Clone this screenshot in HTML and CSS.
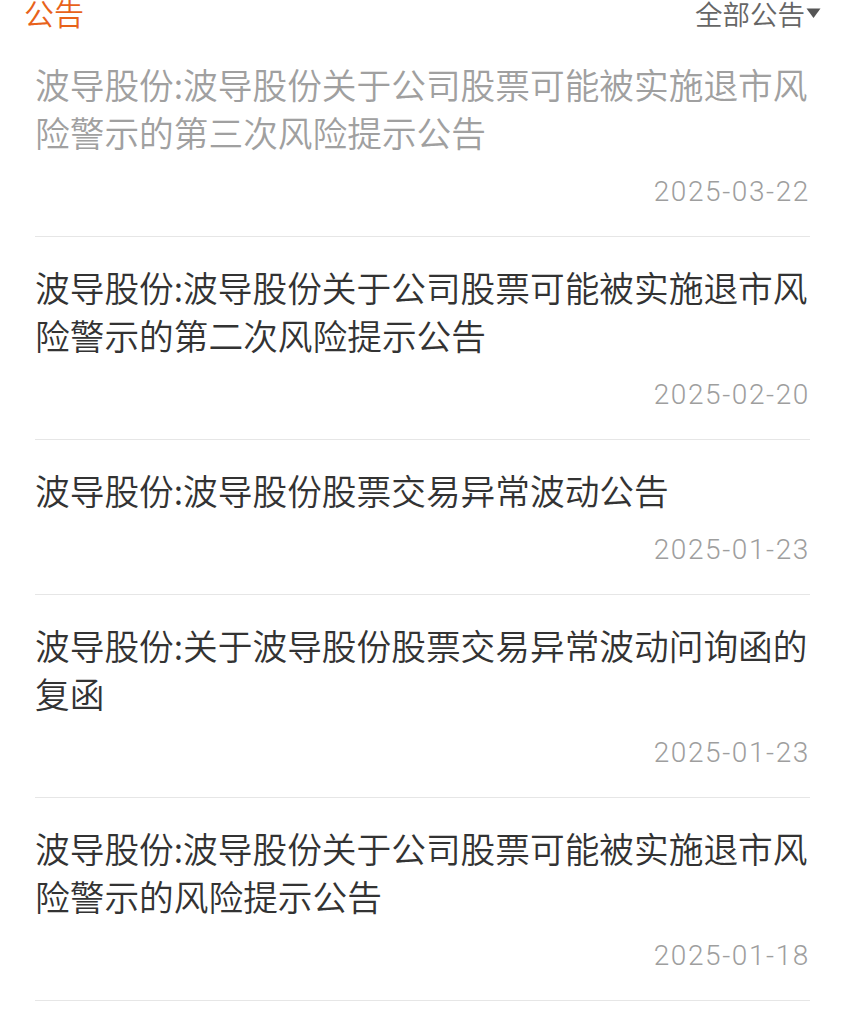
FILE: index.html
```html
<!DOCTYPE html>
<html lang="zh-CN">
<head>
    <meta charset="UTF-8">
    <meta name="viewport" content="width=device-width, initial-scale=1.0">
    <title>公告</title>
    <link rel="stylesheet" href="styles.css">
</head>
<body>
    <div class="container">
        <div class="notice-head">
            <span class="notice-title">公告</span>
            <span class="notice-filter">全部公告<svg class="caret" width="17" height="12" viewBox="0 0 17 12"><path d="M1.5 1.5h14L8.5 11z" fill="#555"/></svg></span>
        </div>
        <ul class="notice-list">
            <li class="read">
                <p class="item-title">波导股份:波导股份关于公司股票可能被实施退市风险警示的第三次风险提示公告</p>
                <p class="item-date">2025-03-22</p>
            </li>
            <li>
                <p class="item-title">波导股份:波导股份关于公司股票可能被实施退市风险警示的第二次风险提示公告</p>
                <p class="item-date">2025-02-20</p>
            </li>
            <li>
                <p class="item-title">波导股份:波导股份股票交易异常波动公告</p>
                <p class="item-date">2025-01-23</p>
            </li>
            <li>
                <p class="item-title">波导股份:关于波导股份股票交易异常波动问询函的复函</p>
                <p class="item-date">2025-01-23</p>
            </li>
            <li>
                <p class="item-title">波导股份:波导股份关于公司股票可能被实施退市风险警示的风险提示公告</p>
                <p class="item-date">2025-01-18</p>
            </li>
        </ul>
    </div>
</body>
</html>
```

FILE: styles.css
```css
* {
    margin: 0;
    padding: 0;
    box-sizing: border-box;
    font-family: "Noto Sans CJK SC", "Noto Sans", sans-serif;
}

body {
    background-color: #ffffff;
    color: #333;
}

.container {
    padding: 0 35px;
}

/* header row sits partly above the top edge, as in the scrolled view */
.notice-head {
    display: flex;
    justify-content: space-between;
    align-items: flex-end;
    height: 34px;
    margin: 0 -12px 0 -11px;
}

.notice-title {
    font-size: 30px;
    font-weight: 350;
    line-height: 30px;
    color: #e8621a;
    margin-bottom: 7px;
}

.notice-filter {
    display: flex;
    align-items: center;
    font-size: 27.5px;
    font-weight: 350;
    line-height: 28px;
    color: #666;
    margin-bottom: 7px;
}

.notice-list {
    list-style-type: none;
}

.notice-list li {
    padding: 26px 0 26px;
    border-bottom: 1px solid #e6e6e6;
}

.item-title {
    font-size: 34.7px;
    font-weight: 350;
    line-height: 48px;
    color: #333;
}

.read .item-title {
    color: #a0a0a0;
}

.item-date {
    margin-top: 18px;
    text-align: right;
    font-family: Roboto, "Liberation Sans", sans-serif;
    font-size: 28px;
    font-weight: 300;
    line-height: 36px;
    letter-spacing: 1.6px;
    color: #9e9e9e;
}
```
